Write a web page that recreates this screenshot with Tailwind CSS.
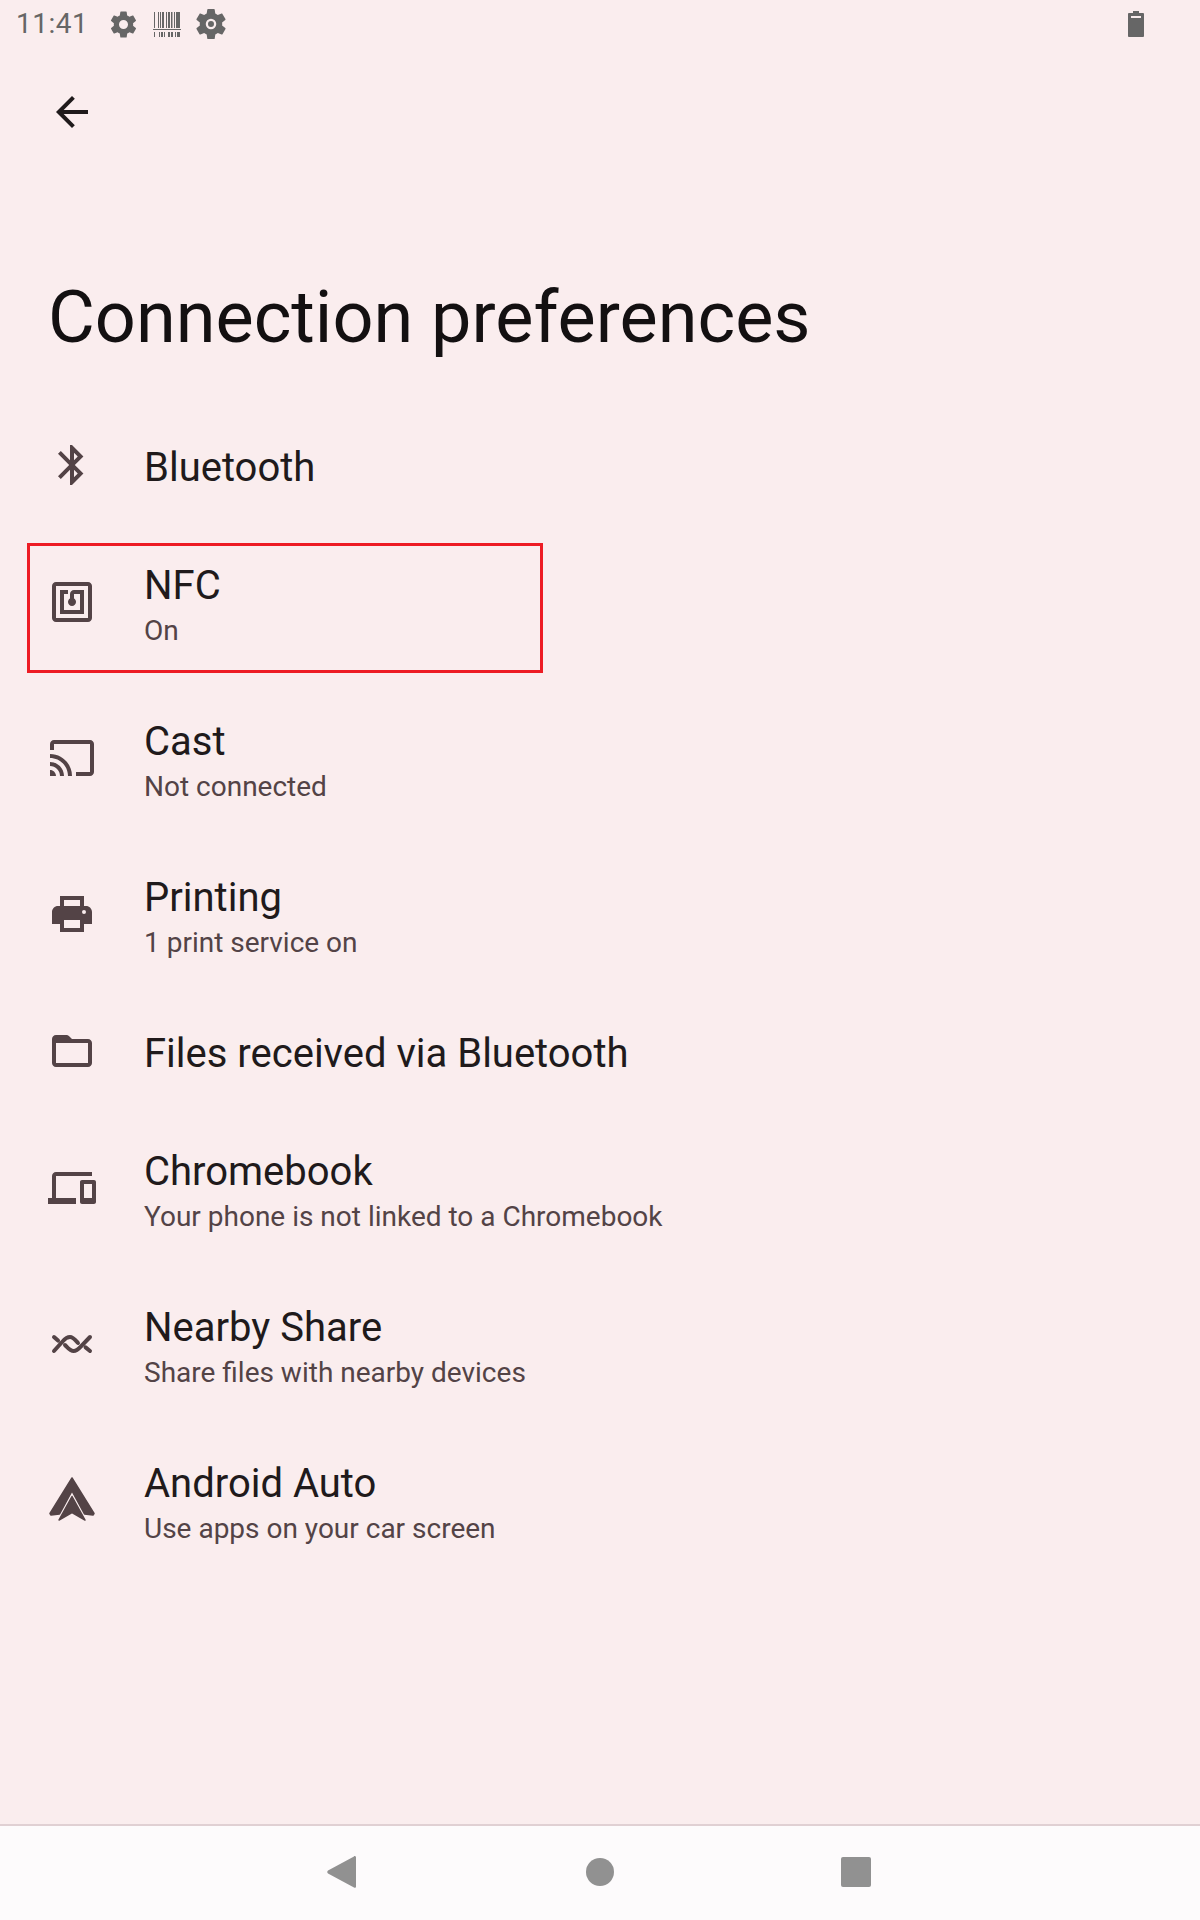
<!DOCTYPE html>
<html lang="en">
<head>
    <meta charset="UTF-8">
    <meta name="viewport" content="width=device-width, initial-scale=1.0">
    <title>Connection preferences</title>
    <script src="https://cdn.jsdelivr.net/npm/@tailwindcss/browser@4"></script>
</head>
<body class="bg-[#faedee] font-['Roboto',sans-serif]">
    <div class="w-[1200px] h-[1920px] flex flex-col overflow-hidden">
        <!-- status bar -->
        <div class="h-[48px] shrink-0 flex items-center pl-[16px] pr-[56px] text-[#666666]">
            <span class="text-[28px] leading-none tracking-[0.5px]">11:41</span>
            <svg class="w-[31px] h-[31px] ml-[20px]" viewBox="0 0 24 24" fill="#666666"><path fill-rule="evenodd" d="M19.4 13c.04-.32.07-.66.07-1s-.03-.68-.07-1l2.11-1.65c.19-.15.24-.42.12-.64l-2-3.46c-.12-.22-.39-.3-.61-.22l-2.49 1c-.52-.4-1.08-.73-1.69-.98l-.38-2.65C14.46 2.18 14.25 2 14 2h-4c-.25 0-.46.18-.49.42l-.38 2.65c-.61.25-1.17.59-1.69.98l-2.49-1c-.23-.09-.49 0-.61.22l-2 3.46c-.13.22-.07.49.12.64L4.57 11c-.04.32-.07.66-.07 1s.03.68.07 1l-2.11 1.65c-.19.15-.24.42-.12.64l2 3.46c.12.22.39.3.61.22l2.49-1c.52.4 1.08.73 1.69.98l.38 2.65c.03.24.24.42.49.42h4c.25 0 .46-.18.49-.42l.38-2.65c.61-.25 1.17-.59 1.69-.98l2.49 1c.23.09.49 0 .61-.22l2-3.46c.12-.22.07-.49-.12-.64L19.4 13zM12 15.5a3.5 3.5 0 1 1 0-7 3.5 3.5 0 0 1 0 7z"/></svg>
            <svg class="w-[28px] h-[25px] ml-[14px]" viewBox="0 0 28 25" fill="#666666"><path d="M1 0h1v16H1zM5 0h1v16H5zM7 0h1v16H7zM9 0h2v16H9zM13 0h1v16h-1zM15 0h2v16h-2zM18 0h1.500v16H18zM21 0h1v16h-1zM23 0h4v16h-4zM0 17h28v1H0zM1 20h1v5H1zM6 20h1v5H6zM8 20h2v5H8zM11 20h1v5h-1zM15 20h2v5h-2zM18 20h2v5h-2zM22 20h1v5h-1zM24 20h3v5h-3z"/></svg>
            <svg class="w-[36px] h-[36px] ml-[12px]" viewBox="0 0 24 24" fill="#666666"><path fill-rule="evenodd" d="M19.4 13c.04-.32.07-.66.07-1s-.03-.68-.07-1l2.11-1.65c.19-.15.24-.42.12-.64l-2-3.46c-.12-.22-.39-.3-.61-.22l-2.49 1c-.52-.4-1.08-.73-1.69-.98l-.38-2.65C14.46 2.18 14.25 2 14 2h-4c-.25 0-.46.18-.49.42l-.38 2.65c-.61.25-1.17.59-1.69.98l-2.49-1c-.23-.09-.49 0-.61.22l-2 3.46c-.13.22-.07.49.12.64L4.57 11c-.04.32-.07.66-.07 1s.03.68.07 1l-2.11 1.65c-.19.15-.24.42-.12.64l2 3.46c.12.22.39.3.61.22l2.49-1c.52.4 1.08.73 1.69.98l.38 2.65c.03.24.24.42.49.42h4c.25 0 .46-.18.49-.42l.38-2.65c.61-.25 1.17-.59 1.69-.98l2.49 1c.23.09.49 0 .61-.22l2-3.46c.12-.22.07-.49-.12-.64L19.4 13zM12 15.500a3.500 3.500 0 1 1 0-7 3.500 3.500 0 0 1 0 7zM12 14a2 2 0 1 0 0-4 2 2 0 0 0 0 4z"/></svg>
            <svg class="w-[16px] h-[26px] ml-auto" viewBox="0 0 16 26"><path fill="#666666" d="M5 0h6v2h4c.5 0 1 .5 1 1v22c0 .5-.5 1-1 1H1c-.5 0-1-.5-1-1V3c0-.5.5-1 1-1h4z"/><path fill="#faedee" d="M3 5h10v2H3z"/></svg>
        </div>

        <!-- toolbar -->
        <div class="h-[128px] shrink-0 flex items-center pl-[48px]">
            <svg class="w-[48px] h-[48px]" viewBox="0 0 24 24" fill="#1f1a1b"><path d="M20 11H7.830l5.590-5.590L12 4l-8 8 8 8 1.410-1.410L7.830 13H20v-2z"/></svg>
        </div>

        <!-- title -->
        <h1 class="h-[229px] shrink-0 pl-[48px] pt-[100px] text-[72px] leading-[84px] text-[#131011]">Connection preferences</h1>

        <!-- list -->
        <div class="flex flex-col">
            <div class="h-[124px] pt-[2px] flex items-center">
                <div class="w-[144px] pl-[48px] shrink-0 mb-[6px]">
                    <svg class="w-[48px] h-[48px]" viewBox="0 0 24 24" fill="#534346"><path d="M17.710 7.710L12 2h-1v7.590L6.410 5 5 6.410 10.590 12 5 17.590 6.410 19 11 14.410V22h1l5.710-5.710-4.300-4.290 4.300-4.290zM13 5.830l1.880 1.880L13 9.590V5.830zm1.880 10.460L13 18.170v-3.760l1.880 1.880z"/></svg>
                </div>
                <div class="text-[40px] leading-[48px] text-[#201a1b]">Bluetooth</div>
            </div>

            <div class="h-[156px] flex items-center relative">
                <div class="absolute left-[27px] top-[14px] w-[516px] h-[130px] border-[3px] border-[#ed1c24]"></div>
                <div class="w-[144px] pl-[48px] shrink-0 mb-[10px]">
                    <svg class="w-[48px] h-[48px]" viewBox="0 0 24 24" fill="#534346"><path d="M20 2H4c-1.100 0-2 .9-2 2v16c0 1.100.9 2 2 2h16c1.100 0 2-.9 2-2V4c0-1.100-.9-2-2-2zm0 18H4V4h16v16zM18 6h-5c-1.100 0-2 .9-2 2v2.280c-.6.350-1 .98-1 1.720 0 1.100.9 2 2 2s2-.9 2-2c0-.74-.4-1.380-1-1.720V8h3v8H8V8h2V6H6v12h12V6z"/></svg>
                </div>
                <div>
                    <div class="text-[40px] leading-[48px] text-[#201a1b]">NFC</div>
                    <div class="text-[28px] leading-[42px] text-[#534346]">On</div>
                </div>
            </div>

            <div class="h-[156px] flex items-center">
                <div class="w-[144px] pl-[48px] shrink-0 mb-[10px]">
                    <svg class="w-[48px] h-[48px]" viewBox="0 0 24 24" fill="#534346"><path d="M21 3H3c-1.100 0-2 .9-2 2v3h2V5h18v14h-7v2h7c1.100 0 2-.9 2-2V5c0-1.100-.9-2-2-2zM1 18v3h3c0-1.660-1.340-3-3-3zm0-4v2c2.760 0 5 2.240 5 5h2c0-3.870-3.130-7-7-7zm0-4v2c4.970 0 9 4.030 9 9h2c0-6.080-4.930-11-11-11z"/></svg>
                </div>
                <div>
                    <div class="text-[40px] leading-[48px] text-[#201a1b]">Cast</div>
                    <div class="text-[28px] leading-[42px] text-[#534346]">Not connected</div>
                </div>
            </div>

            <div class="h-[156px] flex items-center">
                <div class="w-[144px] pl-[48px] shrink-0 mb-[10px]">
                    <svg class="w-[48px] h-[48px]" viewBox="0 0 24 24" fill="#534346"><path fill-rule="evenodd" d="M19 8H5c-1.660 0-3 1.340-3 3v6h4v4h12v-4h4v-6c0-1.660-1.340-3-3-3zm-3 11H8v-4h8v4zm2-7a1 1 0 1 1 0-2 1 1 0 0 1 0 2z"/><path d="M18 3H6v5h2V5h8v3h2z"/></svg>
                </div>
                <div>
                    <div class="text-[40px] leading-[48px] text-[#201a1b]">Printing</div>
                    <div class="text-[28px] leading-[42px] text-[#534346]">1 print service on</div>
                </div>
            </div>

            <div class="h-[118px] pb-[4px] flex items-center">
                <div class="w-[144px] pl-[48px] shrink-0 mb-[6px]">
                    <svg class="w-[48px] h-[48px]" viewBox="0 0 24 24" fill="#534346"><path fill-rule="evenodd" d="M20 6h-8l-1.410-1.410C10.210 4.210 9.700 4 9.170 4H4c-1.100 0-2 .9-2 2v12c0 1.100.9 2 2 2h16c1.100 0 2-.9 2-2V8c0-1.100-.9-2-2-2zm0 12H4V8h16v10z"/></svg>
                </div>
                <div class="text-[40px] leading-[48px] text-[#201a1b]">Files received via Bluetooth</div>
            </div>

            <div class="h-[156px] flex items-center">
                <div class="w-[144px] pl-[48px] shrink-0 mb-[10px]">
                    <svg class="w-[48px] h-[48px]" viewBox="0 0 24 24" fill="#534346"><path d="M4 6h18V4H4c-1.100 0-2 .9-2 2v11H0v3h14v-3H4V6zm19 2h-6c-.55 0-1 .45-1 1v10c0 .55.45 1 1 1h6c.55 0 1-.45 1-1V9c0-.55-.45-1-1-1zm-1 9h-4v-7h4v7z"/></svg>
                </div>
                <div>
                    <div class="text-[40px] leading-[48px] text-[#201a1b]">Chromebook</div>
                    <div class="text-[28px] leading-[42px] text-[#534346]">Your phone is not linked to a Chromebook</div>
                </div>
            </div>

            <div class="h-[156px] flex items-center">
                <div class="w-[144px] pl-[48px] shrink-0 mb-[10px]">
                    <svg class="w-[48px] h-[48px]" viewBox="0 0 24 24" fill="none" stroke="#534346" stroke-width="2" stroke-linecap="round"><path d="M3 8.500L5 10.300M3 15.500L7.500 10.500C8.500 9.300 9.700 8.500 11 8.500C12.500 8.500 13.500 9.800 15 11.500M8.500 12.500C10 14 11 15.500 12.800 15.500C14.200 15.500 15.300 14.500 16.500 13.200L21 8.500M18.800 13.700L21 15.500"/></svg>
                </div>
                <div>
                    <div class="text-[40px] leading-[48px] text-[#201a1b]">Nearby Share</div>
                    <div class="text-[28px] leading-[42px] text-[#534346]">Share files with nearby devices</div>
                </div>
            </div>

            <div class="h-[156px] flex items-center">
                <div class="w-[144px] pl-[48px] shrink-0 mb-[10px]">
                    <svg class="w-[48px] h-[48px]" viewBox="0 0 48 48" fill="#534346" stroke="#534346" stroke-width="1.500" stroke-linejoin="round"><path d="M24 2L46 37.500L45 39L36.500 38L24 15L11.500 38L3 39L2 37.500z"/><path d="M24 20.500L37 44L24 36.500L11 44z"/></svg>
                </div>
                <div>
                    <div class="text-[40px] leading-[48px] text-[#201a1b]">Android Auto</div>
                    <div class="text-[28px] leading-[42px] text-[#534346]">Use apps on your car screen</div>
                </div>
            </div>
        </div>

        <!-- nav bar -->
        <div class="mt-auto h-[96px] shrink-0 bg-[#fdfbfc] border-t-2 border-[#e0d0d3] flex items-center pl-[327px] pb-[2px]">
            <svg class="w-[29px] h-[32px]" viewBox="0 0 29 32" fill="#919191"><path d="M27.500 0c1 0 1.500.6 1.500 1.500v29c0 1-.9 1.800-2 1L1 17.500c-1-.7-1-2.300 0-3L27 .4c.2-.2.3-.4.5-.4z"/></svg>
            <div class="ml-[230px] w-[28px] h-[28px] rounded-full bg-[#919191]"></div>
            <div class="ml-[227px] w-[30px] h-[30px] rounded-[2px] bg-[#919191]"></div>
        </div>
    </div>
</body>
</html>
